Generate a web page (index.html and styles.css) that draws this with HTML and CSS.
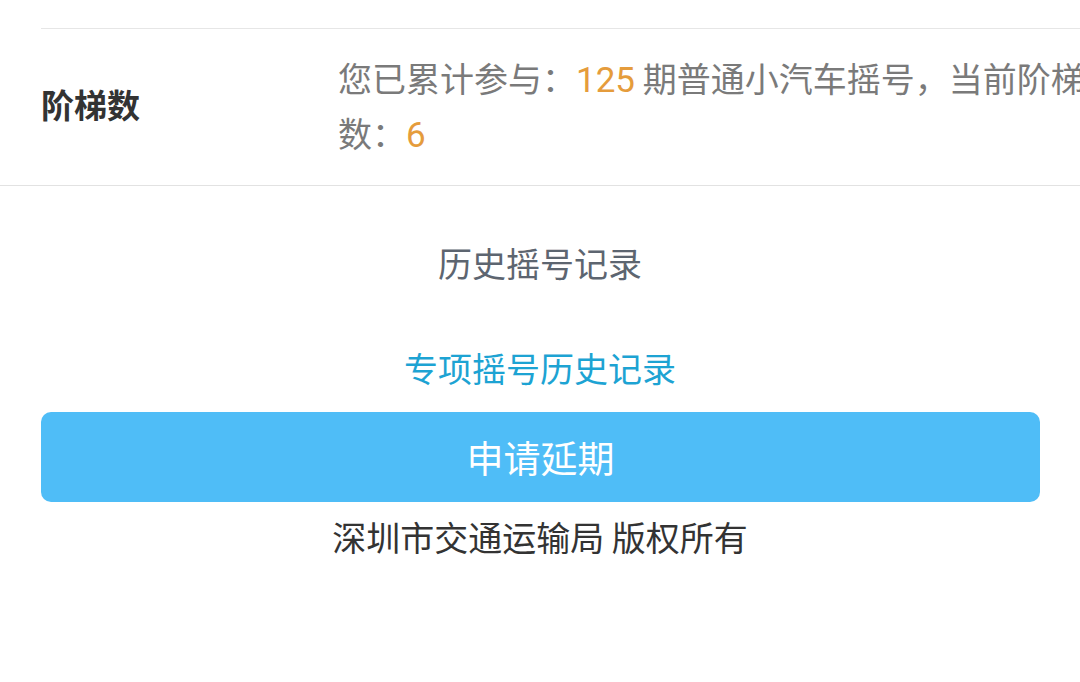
FILE: index.html
```html
<!DOCTYPE html>
<html lang="zh-CN">
<head>
    <meta charset="UTF-8">
    <meta name="viewport" content="width=device-width, initial-scale=1.0">
    <title>摇号信息</title>
    <link rel="stylesheet" href="styles.css">
</head>
<body>
    <div class="page">
        <div class="list">
            <div class="row">
                <div class="label">阶梯数</div>
                <div class="value">您已累计参与：<span class="num">125</span> 期普通小汽车摇号，当前阶梯数：<span class="num">6</span></div>
            </div>
        </div>

        <div class="links">
            <a class="history" href="#">历史摇号记录</a>
            <a class="special" href="#">专项摇号历史记录</a>
        </div>

        <div class="actions">
            <button class="btn" type="button">申请延期</button>
        </div>

        <p class="footer">深圳市交通运输局 版权所有</p>
    </div>
</body>
</html>
```

FILE: styles.css
```css
html, body {
    margin: 0;
    padding: 0;
    background-color: #fff;
}
body {
    font-family: "Noto Sans CJK SC", "Noto Sans", sans-serif;
    color: #333;
}
.page {
    width: 1080px;
    overflow: hidden;
}
.list {
    padding-top: 28px;
    border-bottom: 1px solid #e2e2e2;
}
.row {
    margin-left: 41px;
    border-top: 1px solid #e6e6e6;
    padding: 21px 0 25px;
    display: flex;
    align-items: center;
}
.label {
    flex: 0 0 297px;
    font-size: 33px;
    line-height: 40px;
    font-weight: bold;
    color: #333;
    margin-top: -2px;
}
.value {
    flex: 0 0 800px;
    font-size: 34px;
    line-height: 55px;
    color: #7a7a7a;
}
.num {
    font-family: Roboto, "Noto Sans CJK SC", sans-serif;
    font-size: 35px;
    line-height: 1;
    color: #e59c3c;
}
.links {
    display: flex;
    flex-direction: column;
    align-items: center;
    padding-top: 57px;
    gap: 65px;
}
.links a {
    font-size: 34px;
    line-height: 40px;
    text-decoration: none;
}
.history {
    color: #5d6570;
}
.special {
    color: #1da3d3;
}
.actions {
    padding: 24px 40px 0 41px;
}
.btn {
    display: block;
    width: 100%;
    height: 90px;
    border: none;
    border-radius: 10px;
    background-color: #4fbdf7;
    color: #fff;
    font-family: inherit;
    font-size: 37px;
    cursor: pointer;
}
.footer {
    margin: 15px 0 0;
    text-align: center;
    font-size: 34px;
    line-height: 40px;
    color: #333;
}
```
